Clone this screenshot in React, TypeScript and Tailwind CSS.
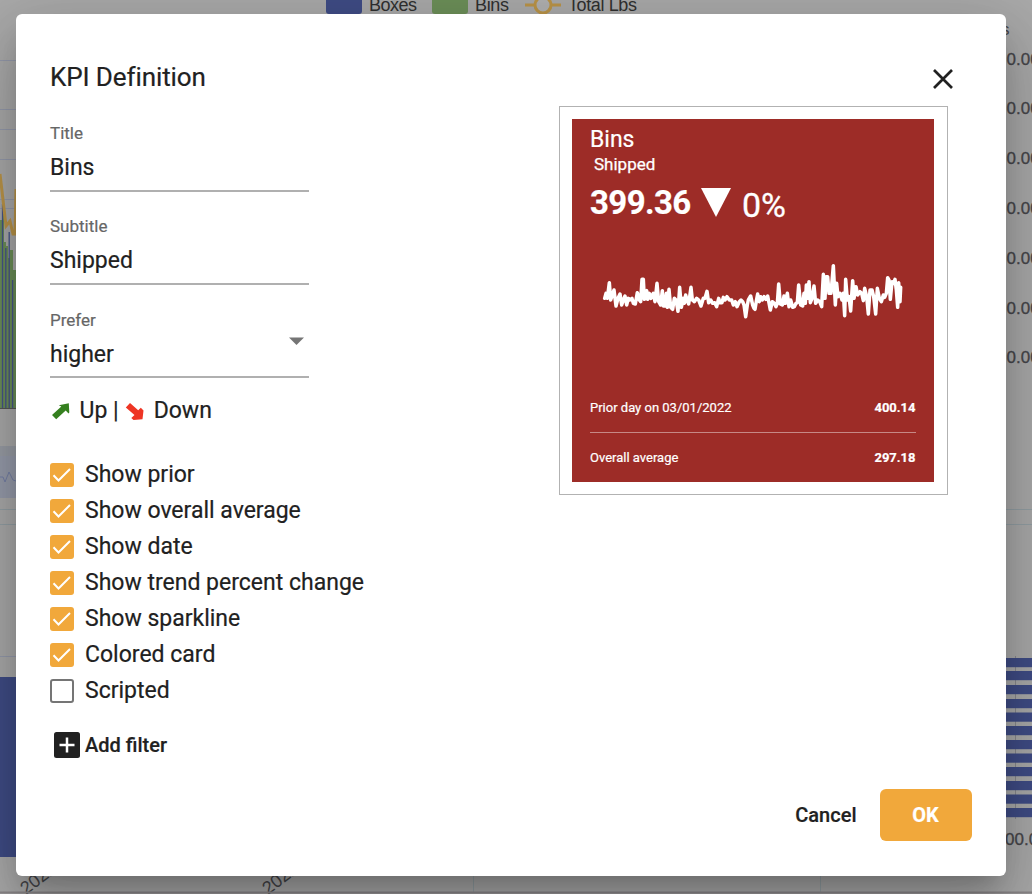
import React from "react";

const SPARK =
  "44,145 48,130 52,145 58,98 62,150 67,135 72,120 78,168 84,145 90,132 95,165 100,150 105,138 110,165 115,145 120,150 126,145 130,160 136,162 142,128 148,150 152,155 156,88 160,88 163,148 167,125 170,122 173,148 178,130 183,145 190,130 195,155 201,100 206,155 212,165 217,122 220,168 225,168 229,130 232,172 237,118 242,172 248,178 253,145 258,150 264,184 269,112 274,172 280,145 283,160 287,135 291,150 296,162 303,112 307,150 313,155 320,145 326,150 333,168 340,145 345,145 351,124 356,158 362,150 368,160 374,158 380,170 386,145 390,158 396,158 400,142 405,150 411,140 418,150 425,150 430,165 436,155 441,170 448,155 453,150 458,155 462,165 467,200 472,165 475,150 482,138 488,165 492,175 " +
  "495,178 500,148 503,132 508,155 512,140 517,150 522,140 528,148 533,138 541,180 547,155 553,160 558,170 562,160 566,102 571,162 577,165 582,138 586,160 592,130 597,170 602,150 608,172 613,170 618,160 622,158 626,105 632,165 638,168 642,130 646,160 649,105 653,145 657,95 661,158 666,145 672,108 677,160 683,150 689,155 695,170 700,73 705,145 708,80 713,80 717,130 723,130 730,47 736,165 740,100 744,140 750,130 756,150 760,130 764,197 767,88 772,150 777,140 782,183 788,92 792,145 798,110 803,135 810,125 815,130 820,152 824,115 830,140 835,192 840,120 846,120 851,140 857,192 862,115 868,145 874,155 880,135 884,142 889,130 893,83 897,90 901,148 906,95 911,100 915,88 919,120 923,172 926,98 930,155 932,112";

const OPTIONS = [
  { label: "Show prior", checked: true },
  { label: "Show overall average", checked: true },
  { label: "Show date", checked: true },
  { label: "Show trend percent change", checked: true },
  { label: "Show sparkline", checked: true },
  { label: "Colored card", checked: true },
  { label: "Scripted", checked: false },
];

const AXIS_Y = [65, 114, 164, 214, 264, 314, 363];
const GRID_Y = [60, 109, 129, 159, 199, 208];
const BARS_Y = [658, 671, 685, 699, 712.5, 726, 740, 753.5, 767, 781, 794.5, 808];

function Backdrop() {
  return (
    <svg className="absolute inset-0 h-full w-full" viewBox="0 0 1032 894">
      <rect width="1032" height="894" fill="#a9a9a9" />
      <g fontFamily="Liberation Sans, sans-serif" fontSize="18" fill="#303030">
        <rect x="326" y="-8" width="36" height="22" rx="3" fill="#3f4c85" />
        <text x="369" y="11" textLength="48">Boxes</text>
        <rect x="432" y="-8" width="36" height="22" rx="3" fill="#6c8f58" />
        <text x="475" y="11" textLength="34">Bins</text>
        <path d="M525 5h36" stroke="#ba9448" strokeWidth="3" />
        <circle cx="543" cy="5" r="8" fill="#b0b0b0" stroke="#ba9448" strokeWidth="3" />
        <text x="568" y="11" textLength="69">Total Lbs</text>
      </g>
      <g stroke="#9499aa" strokeWidth="1">
        {GRID_Y.map((y) => (
          <path key={y} d={`M0 ${y + 0.5}h16`} />
        ))}
        <path d="M0 656.5h16" />
      </g>
      <path d="M0 220h2v-6h2v28h2v4h2v12h2v-8h3v20h3v138H0z" fill="#6c8f58" />
      <path d="M2.5 204v204M5.8 248v160M9.2 232v176M12.6 280v128" stroke="#465489" strokeWidth="1.3" />
      <path d="M0 174l6 52 4-5 3 13h2l1-45" fill="none" stroke="#ba9448" strokeWidth="3" />
      <path d="M0 408.5h16" stroke="#555" />
      <rect y="446" width="16" height="10" fill="#989ca4" />
      <rect y="456" width="16" height="42" fill="#969baa" />
      <path d="M0 477l3 0 2 5 4-10 4 8 3 1" fill="none" stroke="#747fa5" />
      <path d="M0 509.5h16M0 524.5h16M1006 509.5h26M1006 524.5h26" stroke="#929ea3" />
      <rect y="677" width="16" height="180" fill="#3f4c85" />
      <g fontFamily="Liberation Sans, sans-serif" fontSize="17" fill="#46464a">
        <text x="1001" y="35">s</text>
        {AXIS_Y.map((y) => (
          <text key={y} x="1006.5" y={y} stroke="#46464a" strokeWidth="0.3">0.00</text>
        ))}
        <text x="1005" y="845" stroke="#46464a" strokeWidth="0.3">00.00</text>
        <text x="26" y="895" fontSize="18" transform="rotate(-37 26 895)">2022</text>
        <text x="268" y="895" fontSize="18" transform="rotate(-37 268 895)">2022</text>
      </g>
      <path d="M1015.5 656v163" stroke="#88888c" />
      {BARS_Y.map((y) => (
        <rect key={y} x="1000" y={y} width="32" height="9.2" fill="#3f4c85" />
      ))}
      <path d="M473.5 870v22M820.5 870v22" stroke="#929ea3" />
      <path d="M0 892.5h1032" stroke="#8a8688" strokeWidth="2" />
    </svg>
  );
}

function Checkbox({ label, checked }: { label: string; checked: boolean }) {
  return (
    <label className="flex h-9 items-center gap-[11px]">
      {checked ? (
        <span className="h-6 w-6 rounded-[3px] bg-[#f1a83b]">
          <svg viewBox="0 0 24 24" className="h-6 w-6">
            <path d="M3.5 12.3l5 5.2L20 6" fill="none" stroke="#fff" strokeWidth="2" />
          </svg>
        </span>
      ) : (
        <span className="h-6 w-6 rounded-[3px] border-2 border-[#757575]" />
      )}
      <span className="whitespace-nowrap text-[23px] leading-9">{label}</span>
    </label>
  );
}

function Field({ label, value, select }: { label: string; value: string; select?: boolean }) {
  return (
    <div className="flex h-[93.4px] w-[259px] flex-col">
      <span className="h-[26px] text-[17px] leading-[26px] text-[#666]">{label}</span>
      <div className="flex h-[45.5px] items-start justify-between border-b-2 border-[#b0b0b0] pt-1">
        <span className="text-[23px] leading-9">{value}</span>
        {select && (
          <svg className="mr-[5px] h-[8px] w-[15px]" viewBox="0 0 15 8">
            <path d="M0 0.5h15L7.5 8z" fill="#757575" />
          </svg>
        )}
      </div>
    </div>
  );
}

function Arrow({ down }: { down?: boolean }) {
  return (
    <svg className="h-5 w-5" viewBox="0 0 20 20">
      {down ? (
        <path d="M5 2L13.2 9.2 15.8 6.8 18.5 9.6 17.5 18.2 8.5 19 6.3 17 9.5 14.1 0.8 6.4z" fill="#ee3524" />
      ) : (
        <path d="M8.8 4.2L18.8 2.300 19.3 11.500 18.5 12.500 15.7 9.600 6.2 18.200 2 14 11.300 5.600z" fill="#35801f" />
      )}
    </svg>
  );
}

function KpiCard() {
  return (
    <div className="h-[389px] w-[389.5px] border-[1.5px] border-[#b2b2b2] p-3">
      <div className="flex h-[363px] w-[362px] flex-col bg-[#9d2c27] pr-[18px] pl-[18.5px] text-white">
        <div className="h-[33px] pt-[3px] text-[23px] leading-[36px]">Bins</div>
        <div className="h-[24px] pl-[4px] text-[17px] leading-[25px] [-webkit-text-stroke:0.25px_white]">Shipped</div>
        <div className="flex h-[56px] items-center pb-[3px]">
          <span className="w-[111px] text-[33px] font-bold leading-[50px] tracking-[-0.6px]">399.36</span>
          <svg className="h-[29px] w-[30px]" viewBox="0 0 30 29">
            <path d="M0 0h30L15 29z" fill="#fff" />
          </svg>
          <span className="ml-[11px] pt-1 text-[34px] leading-[50px] [-webkit-text-stroke:0.3px_white]">0%</span>
        </div>
        <svg className="mt-[18px] h-[80px] w-[326px] shrink-0" viewBox="0 0 978 240">
          <polyline points={SPARK} fill="none" stroke="#fff" strokeWidth="10.5" strokeLinejoin="round" strokeLinecap="round" />
        </svg>
        <div className="mt-[53px] flex h-[50px] items-center justify-between border-b-[1.5px] border-[#c78986] text-[13px] [-webkit-text-stroke:0.2px_white]">
          <span>Prior day on 03/01/2022</span>
          <span className="font-bold">400.14</span>
        </div>
        <div className="flex h-[49px] items-center justify-between text-[13px] [-webkit-text-stroke:0.2px_white]">
          <span>Overall average</span>
          <span className="font-bold">297.18</span>
        </div>
      </div>
    </div>
  );
}

export default function App() {
  return (
    <div className="relative h-[894px] w-[1032px] overflow-hidden font-[Roboto,sans-serif] text-[#212121]">
      <Backdrop />
      <div className="relative pt-[14px] pl-4">
        <div
          role="dialog"
          className="flex h-[862px] w-[990px] flex-col rounded-[6px] bg-white shadow-[0_16px_22px_-10px_rgba(0,0,0,0.2),0_36px_56px_4px_rgba(0,0,0,0.14),0_13px_68px_12px_rgba(0,0,0,0.12)] [-webkit-text-stroke:0.2px_currentColor]"
        >
          <div className="flex h-[92px] items-start justify-between pr-[53px] pl-[34px]">
            <h1 className="pt-[44px] text-[26px] leading-[38px] tracking-[-0.1px]">KPI Definition</h1>
            <svg className="mt-[54.5px] h-5 w-5" viewBox="0 0 20 20">
              <path d="M1 1l18 18M19 1L1 19" stroke="#212121" strokeWidth="2.7" />
            </svg>
          </div>
          <div className="flex h-[675px] justify-between pr-[58px] pl-[34px]">
            <div className="flex flex-col pt-[14px]">
              <Field label="Title" value="Bins" />
              <Field label="Subtitle" value="Shipped" />
              <Field label="Prefer" value="higher" select />
              <div className="mt-[-7px] flex h-9 items-center text-[23px]">
                <Arrow />
                <span className="ml-[9.5px] mr-[6.5px]">Up |</span>
                <Arrow down />
                <span className="ml-[8.5px]">Down</span>
              </div>
              <div className="mt-[27.5px] flex flex-col">
                {OPTIONS.map((o) => (
                  <Checkbox key={o.label} {...o} />
                ))}
              </div>
              <button className="mt-[18.3px] ml-1 flex h-9 items-center gap-[5px]">
                <svg className="h-[26px] w-[26px]" viewBox="0 0 26 26">
                  <rect width="26" height="26" rx="2.5" fill="#212121" />
                  <path d="M13 5.5v15M5.5 13h15" stroke="#fff" strokeWidth="2.5" />
                </svg>
                <span className="text-[20px] font-medium">Add filter</span>
              </button>
            </div>
            <KpiCard />
          </div>
          <div className="flex items-center justify-end pt-[8px] pr-[34.5px]">
            <button className="mr-[23px] pb-px text-[20px] font-medium">Cancel</button>
            <button className="h-[52px] w-[92px] rounded-[6px] bg-[#f1a83b] pb-px text-[20px] font-bold text-white">OK</button>
          </div>
        </div>
      </div>
    </div>
  );
}
